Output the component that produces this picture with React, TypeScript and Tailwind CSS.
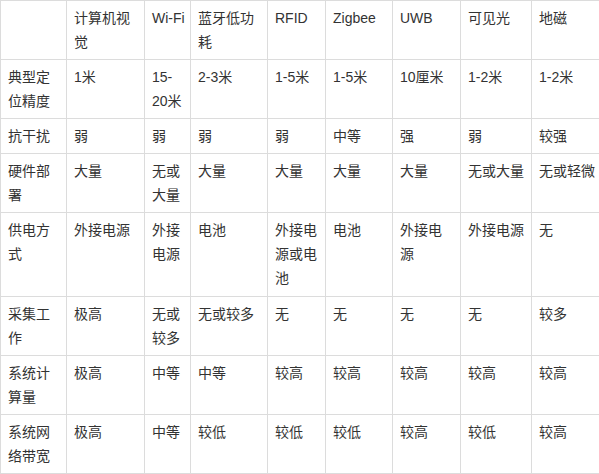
import React from "react";

const headers = ["", "计算机视觉", "Wi-Fi", "蓝牙低功耗", "RFID", "Zigbee", "UWB", "可见光", "地磁"];

const rows: string[][] = [
  ["典型定位精度", "1米", "15-20米", "2-3米", "1-5米", "1-5米", "10厘米", "1-2米", "1-2米"],
  ["抗干扰", "弱", "弱", "弱", "弱", "中等", "强", "弱", "较强"],
  ["硬件部署", "大量", "无或大量", "大量", "大量", "大量", "大量", "无或大量", "无或轻微"],
  ["供电方式", "外接电源", "外接电源", "电池", "外接电源或电池", "电池", "外接电源", "外接电源", "无"],
  ["采集工作", "极高", "无或较多", "无或较多", "无", "无", "无", "无", "较多"],
  ["系统计算量", "极高", "中等", "中等", "较高", "较高", "较高", "较高", "较高"],
  ["系统网络带宽", "极高", "中等", "较低", "较低", "较低", "较高", "较低", "较高"],
];

const widths = [66, 78, 46, 77, 58, 67, 68, 71, 80];

export default function App() {
  return (
    <div className="h-[474px] w-[599px] overflow-hidden bg-white">
      <table
        className="table-fixed border-collapse text-[14px] leading-[24px] text-[#333]"
        style={{ fontFamily: '"Liberation Sans", "Noto Sans CJK SC", sans-serif', width: widths.reduce((a, b) => a + b, 0) }}
      >
        <colgroup>
          {widths.map((w, i) => (
            <col key={i} style={{ width: w }} />
          ))}
        </colgroup>
        <thead>
          <tr>
            {headers.map((h, i) => (
              <th
                key={i}
                className={`border border-[#dcdcdc] px-[7px] py-[5px] text-left align-top font-normal ${h === "Wi-Fi" ? "whitespace-nowrap" : ""}`}
              >
                {h}
              </th>
            ))}
          </tr>
        </thead>
        <tbody>
          {rows.map((r, ri) => (
            <tr key={ri}>
              {r.map((c, ci) => (
                <td key={ci} className={`border border-[#dcdcdc] px-[7px] align-top ${ri === 3 ? "pt-[5px] pb-[6px]" : "py-[5px]"}`}>
                  {c}
                </td>
              ))}
            </tr>
          ))}
        </tbody>
      </table>
    </div>
  );
}
